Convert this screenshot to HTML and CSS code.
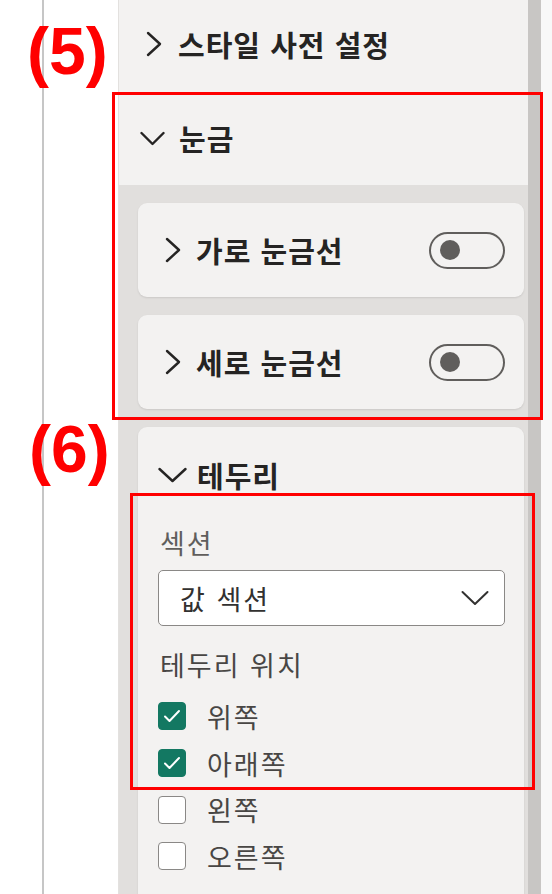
FILE: index.html
```html
<!DOCTYPE html>
<html lang="ko">
<head>
<meta charset="utf-8">
<link rel="stylesheet" href="styles.css">
</head>
<body>
<div class="page">
  <div class="left-area">
    <div class="vline"></div>
  </div>
  <div class="pane">
    <div class="pane-scroll">
      <div class="row-head preset">
        <svg class="chev-r" width="16" height="26" viewBox="0 0 16 26"><polyline points="2,2 14,13 2,24" /></svg>
        <span class="head-text">스타일 사전 설정</span>
      </div>
      <div class="row-head grid-head">
        <svg class="chev-d" width="25" height="15" viewBox="0 0 25 15"><polyline points="1.5,2 12.5,13 23.5,2" /></svg>
        <span class="head-text">눈금</span>
      </div>
      <div class="section-body">
        <div class="card toggle-card">
          <div class="card-title">
            <svg class="chev-r" width="16" height="26" viewBox="0 0 16 26"><polyline points="2,2 14,13 2,24" /></svg>
            <span class="head-text">가로 눈금선</span>
          </div>
          <div class="toggle"><span class="knob"></span></div>
        </div>
        <div class="card toggle-card">
          <div class="card-title">
            <svg class="chev-r" width="16" height="26" viewBox="0 0 16 26"><polyline points="2,2 14,13 2,24" /></svg>
            <span class="head-text">세로 눈금선</span>
          </div>
          <div class="toggle"><span class="knob"></span></div>
        </div>
        <div class="card border-card">
          <div class="card-head">
            <svg class="chev-d" width="29" height="16" viewBox="0 0 29 16"><polyline points="1.5,2 14.5,14 27.5,2" /></svg>
            <span class="head-text">테두리</span>
          </div>
          <div class="field-label">섹션</div>
          <div class="dropdown">
            <span class="dd-text">값 섹션</span>
            <svg class="dd-chev" width="28" height="16" viewBox="0 0 28 16"><polyline points="1.5,2 14,14 26.5,2" /></svg>
          </div>
          <div class="field-label pos-label">테두리 위치</div>
          <div class="checks">
            <label class="check-row">
              <span class="box checked"><svg width="18" height="14" viewBox="0 0 18 14"><polyline points="2,7.5 6.5,12 16,2" /></svg></span>
              <span class="check-text">위쪽</span>
            </label>
            <label class="check-row">
              <span class="box checked"><svg width="18" height="14" viewBox="0 0 18 14"><polyline points="2,7.5 6.5,12 16,2" /></svg></span>
              <span class="check-text">아래쪽</span>
            </label>
            <label class="check-row">
              <span class="box"></span>
              <span class="check-text">왼쪽</span>
            </label>
            <label class="check-row">
              <span class="box"></span>
              <span class="check-text">오른쪽</span>
            </label>
          </div>
        </div>
      </div>
    </div>
    <div class="scrollbar"></div>
  </div>
  <div class="right-area"></div>

  <div class="note-box box5"></div>
  <div class="note-box box6"></div>
  <div class="note-num num5">(5)</div>
  <div class="note-num num6">(6)</div>
</div>
</body>
</html>
```

FILE: styles.css
```css
* { box-sizing: border-box; }
html, body { margin: 0; padding: 0; }
body {
  width: 552px;
  height: 894px;
  overflow: hidden;
  background: #ffffff;
  font-family: "Noto Sans CJK KR", "Noto Sans", sans-serif;
  color: #252423;
}
.page {
  position: relative;
  display: flex;
  width: 552px;
  height: 894px;
}
.left-area {
  width: 118px;
  height: 100%;
  padding-left: 42px;
  background: #ffffff;
}
.vline {
  width: 2px;
  height: 100%;
  background: #c6c6c6;
}
.pane {
  display: flex;
  width: 423px;
  height: 100%;
  border-left: 1px solid #e3e1df;
  background: #f3f2f1;
}
.pane-scroll {
  flex: 1;
  display: flex;
  flex-direction: column;
}
.scrollbar {
  width: 13px;
  height: 100%;
  background: #c8c6c4;
}
.right-area {
  flex: 1;
  background: #f8f8f8;
}

.row-head {
  display: flex;
  align-items: center;
  background: #f3f2f1;
}
.preset { height: 92px; padding-left: 27px; padding-bottom: 4px; }
.grid-head { height: 93px; padding-left: 21px; }
.head-text {
  font-size: 29px;
  font-weight: 700;
  letter-spacing: 1px;
  line-height: 1;
  color: #252423;
  white-space: nowrap;
}
.preset .head-text { margin-left: 16px; }
.grid-head .head-text { margin-left: 14px; }

.chev-r polyline, .chev-d polyline, .dd-chev polyline {
  fill: none;
  stroke: #252423;
  stroke-width: 2.4;
  stroke-linecap: round;
  stroke-linejoin: round;
}

.section-body {
  flex: 1;
  display: flex;
  flex-direction: column;
  gap: 18px;
  background: #e1dfdd;
  padding: 18px 4px 0 19px;
}
.card {
  background: #f3f2f1;
  border-radius: 9px;
  box-shadow: 0 1px 2px rgba(0,0,0,0.10);
}
.toggle-card {
  height: 94px;
  display: flex;
  align-items: center;
  justify-content: space-between;
  padding: 0 19px 0 27px;
}
.card-title {
  display: flex;
  align-items: center;
}
.card-title .head-text { margin-left: 15px; }
.toggle {
  width: 76px;
  height: 37px;
  border: 2px solid #605e5c;
  border-radius: 19px;
  display: flex;
  align-items: center;
  padding-left: 9px;
}
.knob {
  width: 20px;
  height: 20px;
  border-radius: 50%;
  background: #605e5c;
}

.border-card {
  flex: 1;
  padding: 0 19px 0 20px;
  border-radius: 9px 9px 0 0;
}
.card-head {
  height: 96px;
  display: flex;
  align-items: center;
}
.card-head .head-text { margin-left: 10px; }

.field-label {
  height: 38px;
  display: flex;
  align-items: center;
  font-size: 27px;
  letter-spacing: 2px;
  color: #605e5c;
  padding-left: 2px;
}
.dropdown {
  margin-top: 9px;
  height: 56px;
  background: #ffffff;
  border: 1.5px solid #8a8886;
  border-radius: 5px;
  display: flex;
  align-items: center;
  justify-content: space-between;
  padding: 0 15px 0 21px;
}
.dd-text {
  font-size: 27px;
  letter-spacing: 2px;
  color: #323130;
}
.dd-chev polyline { stroke-width: 2; stroke: #323130; }
.pos-label { margin-top: 19px; color: #484644; }

.checks {
  margin-top: 10px;
  display: flex;
  flex-direction: column;
}
.check-row {
  height: 46.7px;
  display: flex;
  align-items: center;
}
.box {
  width: 28px;
  height: 28px;
  border-radius: 4px;
  border: 1.5px solid #8a8886;
  background: #ffffff;
  display: flex;
  align-items: center;
  justify-content: center;
}
.box.checked {
  background: #137862;
  border-color: #137862;
}
.box polyline {
  fill: none;
  stroke: #ffffff;
  stroke-width: 2;
  stroke-linecap: round;
  stroke-linejoin: round;
}
.check-text {
  margin-left: 21px;
  font-size: 27px;
  letter-spacing: 2px;
  color: #484644;
}

/* annotation overlays */
.note-box {
  position: absolute;
  border: 3px solid #ff0000;
}
.box5 { left: 112px; top: 92px; width: 431px; height: 328px; }
.box6 { left: 130px; top: 493px; width: 405px; height: 297px; }
.note-num {
  position: absolute;
  font-family: "Liberation Sans", Arial, sans-serif;
  font-weight: 700;
  font-size: 66px;
  line-height: 1;
  color: #ff0000;
}
.num5 { left: 27px; top: 18px; }
.num6 { left: 29px; top: 416px; }
```
